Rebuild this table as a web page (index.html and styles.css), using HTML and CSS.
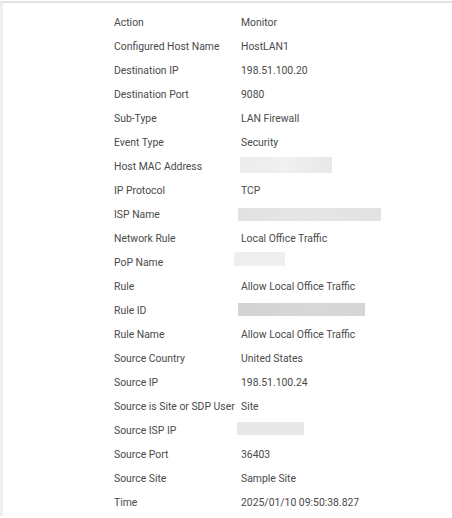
FILE: index.html
```html
<!DOCTYPE html>
<html>
<head>
<meta charset="utf-8">
<link rel="stylesheet" href="styles.css">
</head>
<body>
<div class="panel">
  <div class="details">
    <div class="label">Action</div><div class="value">Monitor</div>
    <div class="label">Configured Host Name</div><div class="value">HostLAN1</div>
    <div class="label">Destination IP</div><div class="value">198.51.100.20</div>
    <div class="label">Destination Port</div><div class="value">9080</div>
    <div class="label">Sub-Type</div><div class="value">LAN Firewall</div>
    <div class="label">Event Type</div><div class="value">Security</div>
    <div class="label">Host MAC Address</div><div class="value"><span class="redact r-mac"></span></div>
    <div class="label">IP Protocol</div><div class="value">TCP</div>
    <div class="label">ISP Name</div><div class="value"><span class="redact r-isp"></span></div>
    <div class="label">Network Rule</div><div class="value">Local Office Traffic</div>
    <div class="label">PoP Name</div><div class="value"><span class="redact r-pop"></span></div>
    <div class="label">Rule</div><div class="value">Allow Local Office Traffic</div>
    <div class="label">Rule ID</div><div class="value"><span class="redact r-ruleid"></span></div>
    <div class="label">Rule Name</div><div class="value">Allow Local Office Traffic</div>
    <div class="label">Source Country</div><div class="value">United States</div>
    <div class="label">Source IP</div><div class="value">198.51.100.24</div>
    <div class="label">Source is Site or SDP User</div><div class="value">Site</div>
    <div class="label">Source ISP IP</div><div class="value"><span class="redact r-srcisp"></span></div>
    <div class="label">Source Port</div><div class="value">36403</div>
    <div class="label">Source Site</div><div class="value">Sample Site</div>
    <div class="label">Time</div><div class="value">2025/01/10 09:50:38.827</div>
  </div>
</div>
</body>
</html>
```
FILE: styles.css
```css
html, body {
  margin: 0;
  padding: 0;
  background: #ffffff;
}
body {
  font-family: Roboto, "Liberation Sans", Arial, sans-serif;
  font-size: 10.4px;
  color: #4a4a4a;
}
.panel {
  margin-top: 1px;
  border-top: 2px solid #e2e2e2;
  border-left: 3px solid #efefef;
  height: 515px;
  box-sizing: border-box;
}
.details {
  display: grid;
  grid-template-columns: 127px auto;
  padding: 7px 0 0 111px;
}
.label, .value {
  height: 24px;
  display: flex;
  align-items: center;
  white-space: nowrap;
}
.redact {
  display: block;
  position: relative;
}
.r-mac {
  width: 92px;
  height: 16px;
  margin-left: -1px;
  top: -1px;
  background: linear-gradient(90deg, #ececec, #f0f0f0 50%, #e8e8e8);
}
.r-isp {
  width: 143px;
  height: 13px;
  margin-left: -3px;
  background: linear-gradient(90deg, #e2e2e2, #e6e6e6 50%, #e2e2e2);
}
.r-pop {
  width: 51px;
  height: 14px;
  margin-left: -7px;
  top: -3px;
  background: #efefef;
}
.r-ruleid {
  width: 127px;
  height: 13px;
  margin-left: -3px;
  top: -1px;
  background: linear-gradient(90deg, #d2d2d2, #d8d8d8 60%, #d5d5d5);
}
.r-srcisp {
  width: 67px;
  height: 13px;
  margin-left: -4px;
  top: -2px;
  background: #e8e8e8;
}
```
